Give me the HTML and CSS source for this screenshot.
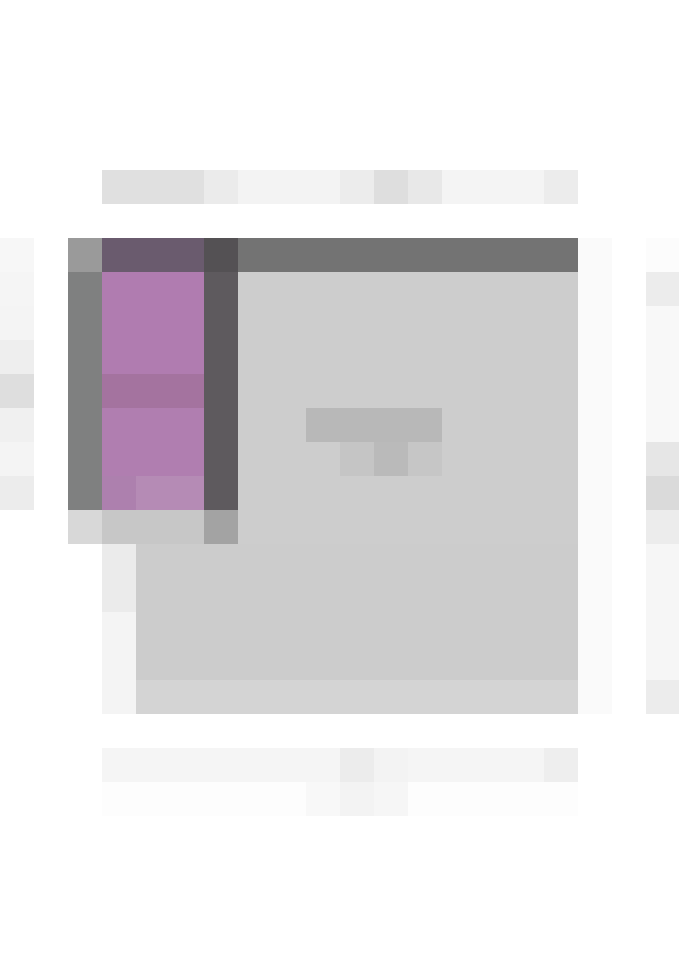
FILE: index.html
```html
<!DOCTYPE html>
<html lang="en">
<head>
<meta charset="utf-8">
<title>Gallery</title>
<link rel="stylesheet" href="styles.css">
</head>
<body>
<main class="carousel">
  <aside class="peek peek-left" aria-label="Previous slide">
    <span class="pl1"></span><span class="pl2"></span><span class="pl3"></span><span class="pl4"></span>
    <span class="pl5"></span><span class="pl6"></span><span class="pl7"></span><span class="pl8"></span>
  </aside>

  <article class="card">
    <header class="title-row" aria-label="Slide title">
      <span class="seg w3 t1"></span><span class="seg w1 t2"></span><span class="seg w3 t3"></span><span class="seg w1 t4"></span>
      <span class="seg w1 t5"></span><span class="seg w1 t6"></span><span class="seg w3 t7"></span><span class="seg w1 t8"></span>
    </header>

    <section class="media">
      <div class="corner"></div>
      <div class="bar-left"></div>
      <div class="bar-mid"></div>
      <div class="toolbar"></div>
      <div class="rail"></div>
      <nav class="panel">
        <span class="p-top"></span>
        <span class="p-sel"></span>
        <span class="p-mid"></span>
        <span class="p-foot"><span class="pf-a"></span><span class="pf-b"></span></span>
      </nav>
      <div class="divider"></div>
      <div class="content">
        <div class="icon">
          <span class="icon-top"></span>
          <span class="icon-bottom"><span class="ib1"></span><span class="ib2"></span><span class="ib3"></span></span>
        </div>
      </div>
      <div class="sill-a"></div>
      <div class="sill-b"></div>
      <div class="sill-c"></div>
      <div class="strip"></div>
      <div class="body"></div>
      <div class="footer"></div>
      <div class="edge"></div>
    </section>

    <footer class="caption">
      <div class="cap-row">
        <span class="seg w7 c1"></span><span class="seg w1 c2"></span><span class="seg w1 c3"></span><span class="seg w4 c1"></span><span class="seg w1 c4"></span>
      </div>
      <div class="cap-row">
        <span class="seg w6 d1"></span><span class="seg w1 d2"></span><span class="seg w1 d3"></span><span class="seg w1 d4"></span><span class="seg w5 d1"></span>
      </div>
    </footer>
  </article>

  <aside class="peek peek-right" aria-label="Next slide">
    <span class="pr1"></span><span class="pr2"></span><span class="pr3"></span><span class="pr4"></span>
    <span class="pr5"></span><span class="pr6"></span><span class="pr7"></span><span class="pr8"></span>
  </aside>
</main>
</body>
</html>
```

FILE: styles.css
```css
* { box-sizing: border-box; }
html, body { margin: 0; padding: 0; background: #ffffff; font-family: "Liberation Sans", Arial, sans-serif; }
body { width: 679px; height: 960px; overflow: hidden; }

.carousel {
  display: flex;
  align-items: flex-start;
  gap: 34px;
  padding-top: 170px;
}

.peek { display: flex; flex-direction: column; width: 34px; }
.peek span { display: block; height: 34px; }
.peek-left { margin-top: 68px; }
.peek-right { margin-top: 68px; width: 33px; }

.pl1 { background: #f7f7f7; }
.pl2 { background: #f5f5f5; }
.pl3 { background: #f4f4f4; }
.pl4 { background: #eeeeee; }
.pl5 { background: #dedede; }
.pl6 { background: #f0f0f0; }
.pl7 { background: #f4f4f4; }
.pl8 { background: #ececec; }

.pr1 { background: #fcfcfc; }
.pr2 { background: #ececec; }
.pr3 { background: #f8f8f8; height: 136px !important; }
.pr4 { background: #e6e6e6; }
.pr5 { background: #dadada; }
.pr6 { background: #ececec; }
.pr7 { background: #f6f6f6; height: 136px !important; }
.pr8 { background: #ececec; }

.card { width: 544px; display: flex; flex-direction: column; gap: 34px; }

.title-row, .cap-row { display: flex; margin-left: 34px; width: 476px; height: 34px; }
.seg { display: block; height: 34px; }
.w1 { width: 34px; } .w3 { width: 102px; } .w4 { width: 136px; }
.w5 { width: 170px; } .w6 { width: 204px; } .w7 { width: 238px; }

.t1 { background: #e0e0e0; } .t2 { background: #ebebeb; } .t3 { background: #f3f3f3; }
.t4 { background: #ececec; } .t5 { background: #dedede; } .t6 { background: #e8e8e8; }
.t7 { background: #f4f4f4; } .t8 { background: #ececec; }

.caption { display: flex; flex-direction: column; }
.c1 { background: #f5f5f5; } .c2 { background: #ececec; } .c3 { background: #f3f3f3; } .c4 { background: #eeeeee; }
.d1 { background: #fdfdfd; } .d2 { background: #f8f8f8; } .d3 { background: #f3f3f3; } .d4 { background: #f6f6f6; }

.media {
  display: grid;
  grid-template-columns: 34px 34px 68px 34px 340px 34px;
  grid-template-rows: 34px 238px 34px 136px 34px;
}
.corner  { grid-area: 1 / 1 / 2 / 2; background: #9a9a9a; }
.bar-left{ grid-area: 1 / 2 / 2 / 4; background: #6a5b6e; }
.bar-mid { grid-area: 1 / 4 / 2 / 5; background: #545154; }
.toolbar { grid-area: 1 / 5 / 2 / 6; background: #737373; }
.rail    { grid-area: 2 / 1 / 3 / 2; background: #7f8080; }
.panel   { grid-area: 2 / 2 / 3 / 4; display: flex; flex-direction: column; }
.p-top   { height: 102px; background: #b07cb0; }
.p-sel   { height: 34px; background: #a4739f; }
.p-mid   { height: 68px; background: #b07eb0; }
.p-foot  { height: 34px; display: flex; }
.pf-a    { width: 34px; background: #ad80ae; }
.pf-b    { width: 68px; background: #b58bb5; }
.divider { grid-area: 2 / 4 / 3 / 5; background: #5e5a5e; }
.content { grid-area: 2 / 5 / 4 / 6; background: #cdcdcd; padding: 136px 0 0 68px; }
.sill-a  { grid-area: 3 / 1 / 4 / 2; background: #d8d8d8; }
.sill-b  { grid-area: 3 / 2 / 4 / 4; background: #c7c7c7; }
.sill-c  { grid-area: 3 / 4 / 4 / 5; background: #a3a3a3; }
.strip   { grid-area: 4 / 2 / 6 / 3; background: linear-gradient(#ebebeb 0 68px, #f4f4f4 68px); }
.body    { grid-area: 4 / 3 / 5 / 6; background: #cccccc; }
.footer  { grid-area: 5 / 3 / 6 / 6; background: #d4d4d4; }
.edge    { grid-area: 1 / 6 / 6 / 7; background: #fafafa; }

.icon { display: flex; flex-direction: column; width: 136px; }
.icon-top { height: 34px; background: #b8b8b8; }
.icon-bottom { display: flex; height: 34px; margin-left: 34px; }
.icon-bottom span { width: 34px; height: 34px; }
.ib1 { background: #c5c5c5; } .ib2 { background: #bababa; } .ib3 { background: #c6c6c6; }
```
